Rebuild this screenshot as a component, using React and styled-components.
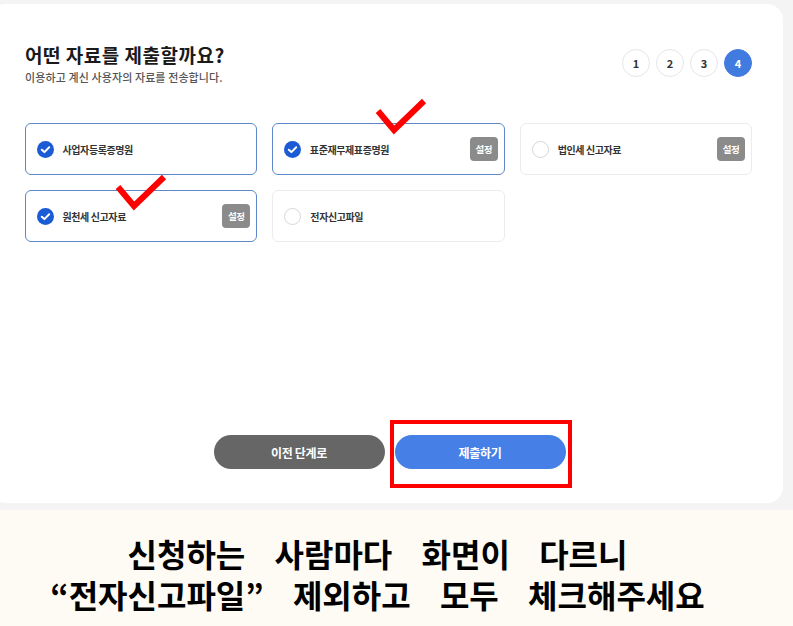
import React from "react";
import styled, { createGlobalStyle } from "styled-components";

const Global = createGlobalStyle`
  html, body { margin: 0; padding: 0; background: #f4f4f4; }
  body { font-family: "Noto Sans CJK KR", "Noto Sans", sans-serif; overflow: hidden; }
  * { box-sizing: border-box; }
`;

const Page = styled.div`
  width: 793px;
  height: 626px;
  display: flex;
  flex-direction: column;
  background: #f4f4f4;
  overflow: hidden;
`;

const Card = styled.div`
  position: relative;
  margin: 4px 10px 0 -10px;
  height: 499px;
  background: #ffffff;
  border-radius: 16px;
  padding: 38px 31px 34px 35px;
  display: flex;
  flex-direction: column;
`;

const Header = styled.div`
  display: flex;
  justify-content: space-between;
  align-items: flex-start;
`;

const Title = styled.h1`
  margin: 0;
  font-size: 19px;
  line-height: 25px;
  font-weight: 700;
  color: #1a1a1a;
  letter-spacing: 0.5px;
`;

const Subtitle = styled.p`
  margin: 3px 0 0;
  font-size: 11px;
  line-height: 15px;
  color: #555;
  font-weight: 500;
  letter-spacing: 0.1px;
`;

const Steps = styled.div`
  display: flex;
  gap: 6px;
  margin-top: 7px;
`;

const Step = styled.div`
  width: 28px;
  height: 28px;
  border-radius: 50%;
  display: flex;
  align-items: center;
  justify-content: center;
  font-size: 11px;
  font-weight: 700;
  color: ${(p) => (p.$active ? "#fff" : "#333")};
  background: ${(p) => (p.$active ? "#427be0" : "#fff")};
  border: 1.5px solid ${(p) => (p.$active ? "#427be0" : "#e6e6e6")};
`;

const OptionGrid = styled.div`
  margin-top: 38px;
  display: grid;
  grid-template-columns: repeat(3, 1fr);
  gap: 15px;
`;

const Option = styled.div`
  height: 52px;
  border-radius: 6px;
  border: ${(p) => (p.$checked ? "1.5px solid #5d87c6" : "1px solid #ececec")};
  display: flex;
  align-items: center;
  padding: 0 6px 0 ${(p) => (p.$checked ? "10.5px" : "11px")};
  gap: 9px;
`;

const Radio = styled.span`
  width: 17px;
  height: 17px;
  border-radius: 50%;
  border: 1.5px solid #d6d6d6;
  background: #fff;
  flex-shrink: 0;
`;

const Label = styled.span`
  flex: 1;
  font-size: 10px;
  font-weight: 700;
  color: #333;
  letter-spacing: -0.4px;
`;

const Badge = styled.span`
  width: 28px;
  height: 24px;
  border-radius: 4px;
  background: #8b8b8b;
  color: #fff;
  font-size: 9.5px;
  font-weight: 700;
  display: flex;
  align-items: center;
  justify-content: center;
  letter-spacing: -0.5px;
`;

const Spacer = styled.div`
  flex: 1;
`;

const ButtonRow = styled.div`
  display: flex;
  justify-content: center;
  gap: 10px;
  padding-left: 2px;
`;

const Button = styled.button`
  position: relative;
  width: 171px;
  height: 34px;
  border: none;
  border-radius: 17px;
  background: ${(p) => (p.$primary ? "#4680e6" : "#666666")};
  color: #fff;
  font-family: inherit;
  font-size: 12px;
  font-weight: 700;
  letter-spacing: -0.3px;
  overflow: visible;
`;

const Highlight = styled.span`
  position: absolute;
  top: -15px;
  left: -5px;
  right: -6px;
  bottom: -19px;
  border: 4.5px solid #ff0000;
  pointer-events: none;
`;

const Mark = styled.svg`
  position: absolute;
  left: ${(p) => p.$x}px;
  top: ${(p) => p.$y}px;
  overflow: visible;
  pointer-events: none;
`;

const CaptionPanel = styled.div`
  flex: 1;
  margin-top: 7px;
  background: #fdfbf4;
  display: flex;
  flex-direction: column;
  align-items: center;
  padding: 23px 38px 0 0;
`;

const CaptionLine = styled.div`
  font-family: "Noto Sans CJK KR", sans-serif;
  font-size: 32px;
  line-height: 41px;
  font-weight: 700;
  color: #000;
  white-space: nowrap;
  word-spacing: 22px;
`;

const CheckIcon = () => (
  <svg width="17" height="17" viewBox="0 0 17 17" style={{ flexShrink: 0 }}>
    <circle cx="8.5" cy="8.5" r="8.5" fill="#1b5bd6" />
    <path d="M4.8 8.7 L7.4 11.1 L12.2 6.3" fill="none" stroke="#fff" strokeWidth="2" strokeLinecap="round" strokeLinejoin="round" />
  </svg>
);

const RedCheck = ({ x, y }) => (
  <Mark $x={x} $y={y} width="52" height="36" viewBox="0 0 52 36">
    <path d="M3 13 L19 32 L49 3" fill="none" stroke="#ff0000" strokeWidth="6" strokeLinecap="butt" strokeLinejoin="miter" />
  </Mark>
);

const options = [
  { label: "사업자등록증명원", checked: true, badge: false },
  { label: "표준재무제표증명원", checked: true, badge: true },
  { label: "법인세 신고자료", checked: false, badge: true },
  { label: "원천세 신고자료", checked: true, badge: true },
  { label: "전자신고파일", checked: false, badge: false },
];

export default function App() {
  return (
    <>
      <Global />
      <Page>
        <Card>
          <Header>
            <div>
              <Title>어떤 자료를 제출할까요?</Title>
              <Subtitle>이용하고 계신 사용자의 자료를 전송합니다.</Subtitle>
            </div>
            <Steps>
              {[1, 2, 3, 4].map((n) => (
                <Step key={n} $active={n === 4}>
                  {n}
                </Step>
              ))}
            </Steps>
          </Header>
          <OptionGrid>
            {options.map((o) => (
              <Option key={o.label} $checked={o.checked}>
                {o.checked ? <CheckIcon /> : <Radio />}
                <Label>{o.label}</Label>
                {o.badge && <Badge>설정</Badge>}
              </Option>
            ))}
          </OptionGrid>
          <Spacer />
          <ButtonRow>
            <Button>이전 단계로</Button>
            <Button $primary>
              제출하기
              <Highlight />
            </Button>
          </ButtonRow>
          <RedCheck x={385} y={94} />
          <RedCheck x={125} y={170} />
        </Card>
        <CaptionPanel>
          <CaptionLine>신청하는 사람마다 화면이 다르니</CaptionLine>
          <CaptionLine>“전자신고파일” 제외하고 모두 체크해주세요</CaptionLine>
        </CaptionPanel>
      </Page>
    </>
  );
}
